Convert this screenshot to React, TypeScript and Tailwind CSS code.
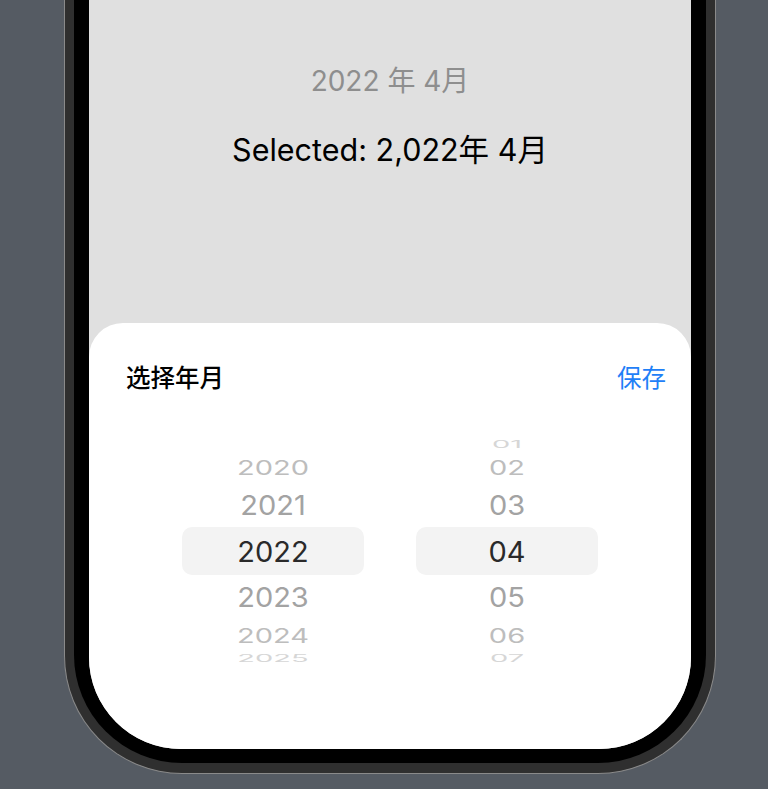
import React from "react";

const FONT = { fontFamily: "Inter, 'Noto Sans CJK SC', sans-serif" };

type Row = { label: string; h: number; sy: number; color: string; selected?: boolean };

function Wheel({ rows }: { rows: Row[] }) {
  return (
    <div className="flex w-[182px] flex-col">
      {rows.map((r, i) => (
        <div
          key={i}
          className={
            "flex w-full items-center justify-center overflow-visible " +
            (r.selected ? "rounded-[10px] bg-[#f3f3f3]" : "")
          }
          style={{ height: r.h }}
        >
          <span
            className="block text-[29px] leading-none"
            style={{ color: r.color, transform: `scaleY(${r.sy})` }}
          >
            {r.label}
          </span>
        </div>
      ))}
    </div>
  );
}

export default function App() {
  const yearRows: Row[] = [
    { label: "", h: 14, sy: 0.35, color: "#d6d6d6" },
    { label: "2020", h: 32, sy: 0.68, color: "#bdbdbd" },
    { label: "2021", h: 44, sy: 0.92, color: "#a3a3a3" },
    { label: "2022", h: 48, sy: 1, color: "#2a2a2a", selected: true },
    { label: "2023", h: 44, sy: 0.92, color: "#a3a3a3" },
    { label: "2024", h: 32, sy: 0.68, color: "#bdbdbd" },
    { label: "2025", h: 14, sy: 0.35, color: "#d6d6d6" },
  ];
  const monthRows: Row[] = [
    { label: "01", h: 14, sy: 0.35, color: "#d6d6d6" },
    { label: "02", h: 32, sy: 0.68, color: "#bdbdbd" },
    { label: "03", h: 44, sy: 0.92, color: "#a3a3a3" },
    { label: "04", h: 48, sy: 1, color: "#2a2a2a", selected: true },
    { label: "05", h: 44, sy: 0.92, color: "#a3a3a3" },
    { label: "06", h: 32, sy: 0.68, color: "#bdbdbd" },
    { label: "07", h: 14, sy: 0.35, color: "#d6d6d6" },
  ];

  return (
    <div className="h-[789px] w-[768px] overflow-hidden bg-[#555b63] pl-[64px]" style={FONT}>
      <div className="h-[774px] w-[652px] rounded-b-[118px] border border-t-0 border-[#8a8a8a] bg-[#2f2f2f] px-[9px] pb-[10px]">
        <div className="h-full w-full rounded-b-[108px] bg-black px-[15px] pb-[14px]">
          <div className="flex h-full w-full flex-col overflow-hidden rounded-b-[92px] bg-[#e0e0e0]">
            <div className="flex h-[323px] shrink-0 flex-col items-center pt-[63px]">
              <div className="text-[28px] leading-[36px] text-[#8e8e8e]">2022 年 4月</div>
              <div className="mt-[33px] text-[30.5px] leading-[36px] text-black">Selected: 2,022年 4月</div>
            </div>
            <div className="flex flex-1 flex-col rounded-t-[34px] bg-white">
              <div className="flex items-center justify-between pl-[37px] pr-[25px] pt-[40px]">
                <span className="text-[24.5px] font-medium leading-[30px] text-black">选择年月</span>
                <span className="text-[24.5px] leading-[30px] text-[#1f80f7]">保存</span>
              </div>
              <div className="flex gap-[52px] px-[93px] pt-[44px]">
                <Wheel rows={yearRows} />
                <Wheel rows={monthRows} />
              </div>
            </div>
          </div>
        </div>
      </div>
    </div>
  );
}
